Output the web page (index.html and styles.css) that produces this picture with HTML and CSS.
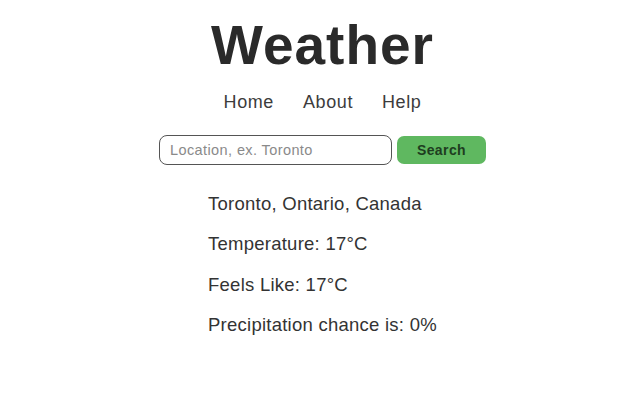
FILE: index.html
```html
<!DOCTYPE html>
<html>
<head>
<meta charset="utf-8">
<link rel="stylesheet" href="styles.css">
</head>
<body>
<div class="page">
  <h1 class="title">Weather</h1>
  <nav class="nav">
    <a href="#">Home</a>
    <a href="#">About</a>
    <a href="#">Help</a>
  </nav>
  <form class="search">
    <input class="search-input" type="text" placeholder="Location, ex. Toronto">
    <button class="search-btn" type="button">Search</button>
  </form>
  <div class="results">
    <p class="line">Toronto, Ontario, Canada</p>
    <p class="line">Temperature: 17°C</p>
    <p class="line">Feels Like: 17°C</p>
    <p class="line">Precipitation chance is: 0%</p>
  </div>
</div>
</body>
</html>
```
FILE: styles.css
```css
html, body {
  margin: 0;
  padding: 0;
  background: #fff;
}
body {
  font-family: "Liberation Sans", Arial, sans-serif;
  color: #333;
}
.page {
  display: flex;
  flex-direction: column;
  align-items: center;
  width: 635px;
  padding-left: 5px;
}
.title {
  margin: 15.6px 0 0 0;
  font-size: 55px;
  line-height: 58px;
  letter-spacing: 1px;
  font-weight: bold;
  color: #2a2a2a;
}
.nav {
  display: flex;
  gap: 29px;
  margin-top: 18.5px;
}
.nav a {
  font-size: 18px;
  line-height: 20px;
  letter-spacing: 0.6px;
  color: #3c3c3c;
  text-decoration: none;
}
.search {
  display: flex;
  gap: 5px;
  margin: 22.8px 0 0 0;
  align-items: center;
}
.search-input {
  box-sizing: border-box;
  width: 233px;
  height: 30px;
  border: 1px solid #555;
  border-radius: 8px;
  padding: 0 10px;
  font-family: "Liberation Sans", Arial, sans-serif;
  font-size: 14.5px;
  letter-spacing: 0.4px;
  color: #333;
}
.search-input::placeholder {
  color: #8a8a8a;
}
.search-btn {
  box-sizing: border-box;
  width: 89px;
  height: 28px;
  border: none;
  border-radius: 7px;
  background: #5fb860;
  font-family: "Liberation Sans", Arial, sans-serif;
  font-size: 14px;
  letter-spacing: 0.4px;
  font-weight: bold;
  color: #1e3d1f;
}
.results {
  align-self: flex-start;
  margin-left: 203px;
  margin-top: 29.3px;
}
.line {
  margin: 0 0 20.3px 0;
  font-size: 18.5px;
  line-height: 20px;
  letter-spacing: 0.25px;
  color: #333;
}
```
